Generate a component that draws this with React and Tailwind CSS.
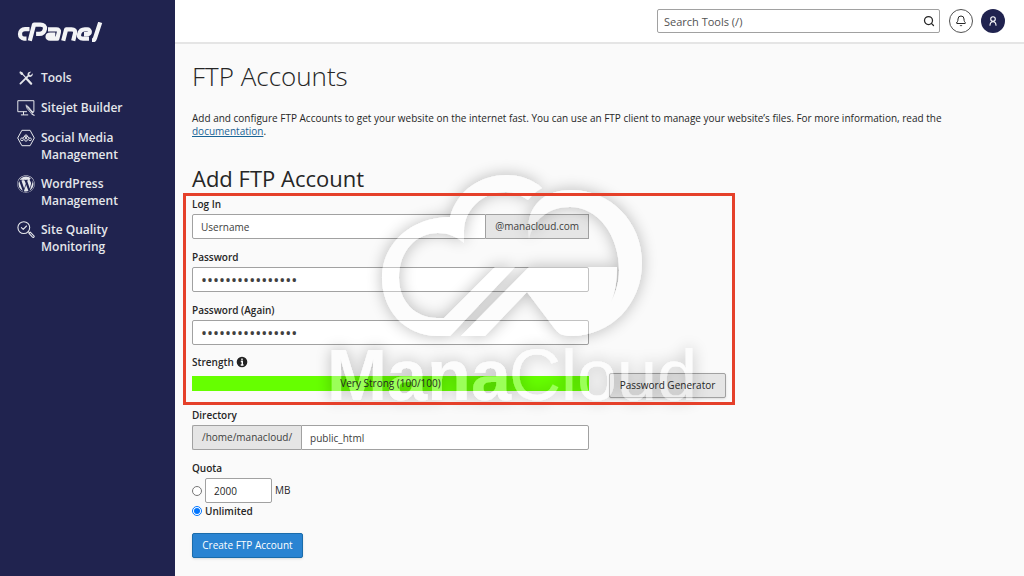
import { FaWordpress } from "react-icons/fa"
import { Bell, Search } from "lucide-react"

const FIELD = "h-[25px] w-full border border-neutral-400 bg-white px-2 text-neutral-700"
const LABEL = "block text-[10px] leading-[14px] font-semibold text-neutral-800"

// Outline icons of the sidebar
const ToolsIcon = () => (
    <svg viewBox="0 0 18 18" className="w-[18px] h-[18px]" fill="none" stroke="currentColor" strokeLinecap="round" strokeLinejoin="round" aria-hidden="true">
        <path d="M3.2 3l1.8.8 1 1.8 7.8 8.6" strokeWidth="1.2" />
        <path d="M3.4 3.2l1.6.6.8 1.5-.8.5-1.4-.9z" fill="currentColor" strokeWidth=".8" />
        <path d="M10 10.3l4.2 4.4" strokeWidth="2.2" />
        <path d="M3.4 14.6l7.6-7.4" strokeWidth="1.8" />
        <path d="M14.2 2.8l-2 1.9.3 1.3 1.3.3 1.9-2c.5 1.8-.9 3.9-2.9 3.6-1.7-.2-2.6-1.7-2.2-3.2.4-1.5 1.9-2.4 3.6-1.9z" fill="currentColor" stroke="none" />
    </svg>
)

const SitejetIcon = () => (
    <svg viewBox="0 0 18 18" className="w-[18px] h-[18px]" fill="none" stroke="currentColor" strokeLinecap="round" strokeLinejoin="round" aria-hidden="true">
        <path d="M9.5 12.7H.8V1.7h16.1v11h-1.2" strokeWidth="1" />
        <path d="M6.5 13v2.500M4.3 15.9h6.5" strokeWidth="1" />
        <path d="M9 6.2l.7 2.8 5 6 1.7-1.3-5-6z" fill="currentColor" strokeWidth=".6" />
        <path d="M10.2 8.6l5 6" stroke="#20234f" strokeWidth=".6" />
        <path d="M15.2 15.3l1.9 1" strokeWidth="1.2" />
    </svg>
)

const SocialIcon = () => (
    <svg viewBox="0 0 18 18" className="w-[18px] h-[18px]" fill="none" stroke="currentColor" strokeLinejoin="round" aria-hidden="true">
        <path d="M4.9 1.3h8.2L17.3 9l-4.2 7.7H4.9L.7 9z" strokeWidth="1" />
        <path d="M5.8 9.5a3.3 3.3 0 0 1 6.4 0" strokeWidth="1" />
        <circle cx="9" cy="7.3" r="1.4" strokeWidth=".9" />
        <circle cx="5" cy="10.3" r="1.4" strokeWidth=".9" />
        <circle cx="9" cy="10.8" r="1.4" strokeWidth=".9" />
        <circle cx="13" cy="10.3" r="1.4" strokeWidth=".9" />
    </svg>
)

const QualityIcon = () => (
    <svg viewBox="0 0 18 18" className="w-[18px] h-[18px]" fill="none" stroke="currentColor" strokeLinecap="round" strokeLinejoin="round" aria-hidden="true">
        <circle cx="6.8" cy="6.6" r="5.9" strokeWidth="1.1" />
        <path d="M4.4 6.7l1.8 1.7L9.5 5" strokeWidth="1.1" />
        <path d="M11.3 10.7l1 1M12 12.4l1.3-1.2 3.6 3.6c.8 1-.5 2.2-1.4 1.4z" strokeWidth="1.1" />
    </svg>
)

const WordPressIcon = () => <FaWordpress className="w-[18px] h-[18px]" aria-hidden="true" />

const NAV = [
    { name: "Tools", icon: ToolsIcon },
    { name: "Sitejet Builder", icon: SitejetIcon },
    { name: "Social Media Management", icon: SocialIcon },
    { name: "WordPress Management", icon: WordPressIcon },
    { name: "Site Quality Monitoring", icon: QualityIcon },
]

const Logo = () => (
    <svg viewBox="0 0 86 20" className="w-[86px] h-[20px]" fill="none" stroke="currentColor" strokeWidth="4.2" strokeLinejoin="round" role="img" aria-label="cPanel">
        <path d="M12.500 7.200H8C5 7.200 3 9.300 3 11.900s1.700 4.700 4 4.700h2.500" />
        <path d="M12.800 18.800l4.200-16.200h6.400c3.200 0 5 1.700 4.500 4.400-.5 2.900-2.700 4.900-5.800 4.900h-3" />
        <path d="M31 7.400h8.200c2.300 0 3.200 1 2.700 2.900l-1.600 6.400h-7.200c-3.600 0-3.300-4.200.2-4.200h5" />
        <path d="M46.200 18.800l2.900-11.400h5.400c3 0 4.200 1.400 3.500 4l-1.800 7.400" />
        <path d="M72 16.700h-6c-3 0-4.500-1.800-3.900-4.500.7-3 2.700-4.800 5.800-4.800h2.400c3.400 0 3.500 4.700-.3 4.700H67" />
        <path d="M75 18.500c2 0 2.600-.8 3.100-2.600L83.200.4" />
    </svg>
)

const InfoIcon = () => (
    <svg viewBox="0 0 12 12" className="w-3 h-3" aria-hidden="true">
        <circle cx="6" cy="6" r="5.3" fill="#222" />
        <path d="M6 2.500v1.700M4.800 5.500H6.300V9M4.700 9h2.800" fill="none" stroke="#fff" strokeWidth="1.4" />
    </svg>
)

// Cloud and name laid faintly over the form
const Watermark = () => (
    <svg viewBox="0 0 400 270" className="absolute left-[137px] -top-[33px] w-[400px] h-[270px] pointer-events-none overflow-visible" aria-hidden="true">
        <defs>
            <filter id="halo" x="-20%" y="-20%" width="140%" height="140%">
                <feGaussianBlur in="SourceAlpha" stdDeviation="8" result="blur" />
                <feComposite in="blur" in2="SourceAlpha" operator="out" result="outer" />
                <feComponentTransfer in="outer" result="shade">
                    <feFuncA type="linear" slope=".27" />
                </feComponentTransfer>
                <feComponentTransfer in="SourceGraphic" result="face">
                    <feFuncA type="linear" slope=".35" />
                </feComponentTransfer>
                <feMerge>
                    <feMergeNode in="shade" />
                    <feMergeNode in="face" />
                </feMerge>
            </filter>
        </defs>
        <g filter="url(#halo)" fill="#fff">
            <path d="M130 176H118C84 176 62 149 62 118 62 82 93 57 130 57 137 31 160 15 186 15c14 0 26 4 36 13-6 3-10 7-14 12-7-5-14-8-22-8-24 0-42 18-42 39v12c-8-7-16-10-26-10-22 0-39 18-39 45 0 23 16 40 38 40h7l51-51h20z" />
            <path d="M165 176h-24l68-69h88c0 14-2 26-6 35 5-10 8-20 8-32 0-35-21-63-49-63-22 0-37 13-41 32-5-28 11-49 42-49 40 0 71 32 71 73s-31 73-71 73c-8 0-12-2-16-7l-28-37z" />
        </g>
        <g filter="url(#halo)" fill="#fff" fontFamily="Liberation Sans, Arial, sans-serif" fontSize="72">
            <text x="7" y="240" fontWeight="700">Mana</text>
            <text x="189" y="240">Cloud</text>
        </g>
    </svg>
)

export default function App() {
    return (
        <div className="flex min-h-screen bg-[#fafafa] font-['Open_Sans',sans-serif] text-neutral-800">
            {/* Sidebar */}
            <aside className="w-[175px] shrink-0 bg-[#20234f] pl-[17px] pt-[22px] text-gray-100">
                <Logo />
                <nav className="mt-[27px] flex flex-col gap-3">
                    {NAV.map(({ name, icon: Icon }) => (
                        <a key={name} href="#" className="flex items-start gap-[6px] text-[12px] leading-[17px] font-semibold text-gray-200">
                            <Icon />
                            <span className="w-[100px]">{name}</span>
                        </a>
                    ))}
                </nav>
            </aside>

            <div className="min-w-0 flex-1">
                {/* Top bar */}
                <header className="flex h-[44px] items-center justify-end border-b-2 border-neutral-200 bg-white pr-[19px]">
                    <div className="relative">
                        <input type="text" aria-label="Search Tools" placeholder="Search Tools (/)" className="block h-6 w-[283px] rounded-xs border border-neutral-400 bg-white px-[6px] text-[11px] placeholder:text-neutral-600" />
                        <Search className="absolute right-[5px] top-[6px] h-3 w-3" strokeWidth={2.5} />
                    </div>
                    <button aria-label="Notifications" className="ml-[9px] flex h-6 w-6 items-center justify-center rounded-full border border-neutral-600"><Bell className="h-3 w-3" /></button>
                    <button aria-label="Account" className="ml-2 flex h-6 w-6 items-center justify-center rounded-full bg-[#20234f] text-white">
                        <svg viewBox="0 0 12 12" className="h-3 w-3" fill="none" stroke="currentColor" strokeWidth="1.1" strokeLinecap="round" aria-hidden="true">
                            <circle cx="6" cy="4" r="2.300" />
                            <path d="M3 10.300C3.200 5.500 8.800 5.500 9 10.300" />
                        </svg>
                    </button>
                </header>

                <main className="px-[17px] pt-4">
                    <h1 className="text-[26px] leading-8 font-light">FTP Accounts</h1>
                    <p className="mt-5 max-w-[780px] text-[10px] leading-[13px]">
                        Add and configure FTP Accounts to get your website on the internet fast. You can use an FTP client to manage your website’s files. For more information, read the <a href="#" className="text-[#1a6496] underline">documentation</a>.
                    </p>
                    <h2 className="mt-[26px] text-[22px] leading-7 font-medium">Add FTP Account</h2>

                    <form className="mt-px text-[10px]">
                        {/* Highlighted login fields */}
                        <div className="relative -ml-[9px] w-[552px] px-[9px] pt-1 pb-[7px]">
                            <div className="w-[397px]">
                                <label htmlFor="login" className={LABEL}>Log In</label>
                                <div className="mt-[3px] flex">
                                    <input id="login" type="text" defaultValue="Username" className={`${FIELD} rounded-l-xs`} />
                                    <span className="flex shrink-0 items-center border border-l-0 border-neutral-400 bg-neutral-200 px-[9px] text-neutral-700"><span className="relative z-10">@manacloud.com</span></span>
                                </div>
                                <label htmlFor="password" className={`${LABEL} mt-[11px]`}>Password</label>
                                <input id="password" type="password" defaultValue="abcdefghijklmnop" className={`${FIELD} mt-[3px] block rounded-xs text-[16px]`} />
                                <label htmlFor="again" className={`${LABEL} mt-[11px]`}>Password (Again)</label>
                                <input id="again" type="password" defaultValue="abcdefghijklmnop" className={`${FIELD} mt-[3px] block rounded-xs text-[16px]`} />
                            </div>
                            <div className="mt-[10px] flex items-center gap-[2px]">
                                <span className={LABEL}>Strength</span>
                                <InfoIcon />
                            </div>
                            <div className="mt-1 flex items-start justify-between">
                                <div className="mt-[3px] h-[15px] w-[397px] bg-[#66ff00] text-center leading-[15px]"><span className="relative z-10">Very Strong (100/100)</span></div>
                                <button type="button" className="h-[25px] w-[117px] rounded-xs border border-neutral-400 bg-neutral-200 shadow-sm"><span className="relative z-10">Password Generator</span></button>
                            </div>
                            <Watermark />
                            <div className="pointer-events-none absolute inset-0 border-3 border-[#e5402a]"></div>
                        </div>

                        {/* Directory */}
                        <div className="mt-[3px] w-[397px]">
                            <label htmlFor="directory" className={LABEL}>Directory</label>
                            <div className="mt-[3px] flex">
                                <span className="flex shrink-0 items-center rounded-l-xs border border-r-0 border-neutral-400 bg-neutral-200 px-[9px] text-neutral-700">/home/manacloud/</span>
                                <input id="directory" type="text" defaultValue="public_html" className={`${FIELD} rounded-r-xs`} />
                            </div>
                        </div>

                        {/* Quota */}
                        <fieldset className="mt-[11px]">
                            <legend className={LABEL}>Quota</legend>
                            <div className="mt-[3px] flex items-center gap-[3px]">
                                <input type="radio" name="quota" aria-label="Limited quota" className="h-[10px] w-[10px]" />
                                <input type="text" aria-label="Quota in MB" defaultValue="2000" className="h-[25px] w-[67px] rounded-xs border border-neutral-400 bg-white px-2" />
                                <span>MB</span>
                            </div>
                            <label className="mt-px flex items-center gap-[3px] leading-[14px] font-semibold">
                                <input type="radio" name="quota" defaultChecked className="h-[10px] w-[10px]" />
                                Unlimited
                            </label>
                        </fieldset>
                        <button type="button" className="mt-[15px] h-[25px] w-[111px] rounded-xs border border-[#1a6cab] bg-[#2a84d2] text-white shadow-sm">Create FTP Account</button>
                    </form>
                </main>
            </div>
        </div>
    )
}
